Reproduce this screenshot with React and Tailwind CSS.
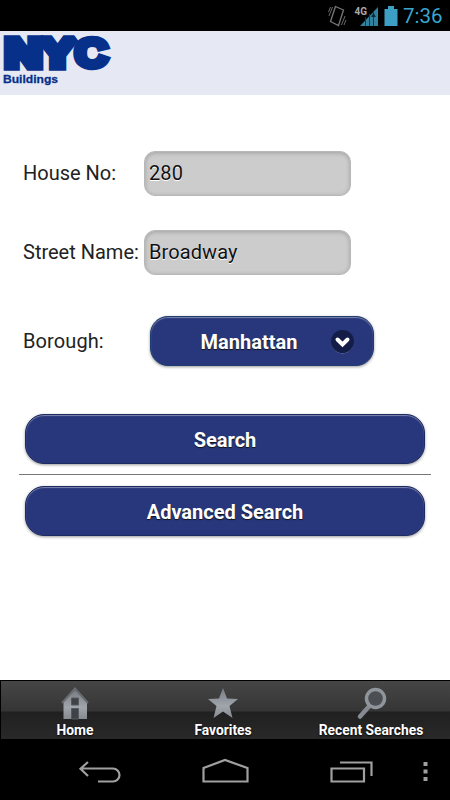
import React from "react";

const fields = [
  { id: "house", label: "House No:", value: "280" },
  { id: "street", label: "Street Name:", value: "Broadway" },
];

export default function App() {
  return (
    <div className="w-[450px] h-[800px] flex flex-col overflow-hidden bg-white font-['Roboto',sans-serif]">
      <StatusBar />
      <header className="h-[64px] shrink-0 bg-[#e6e9f4]">
        <Logo />
      </header>
      <SearchForm />
      <TabBar />
      <SystemNav />
    </div>
  );
}

function StatusBar() {
  return (
    <div className="h-[31px] shrink-0 bg-black flex items-center justify-end pr-[8px]">
      <svg width="72" height="31" viewBox="0 0 72 31">
        <g fill="none" stroke="#777" strokeWidth="1.3">
          <path d="M7.500 6.500 15.500 10 10.500 25.500 2.500 21.500Z" />
          <path d="M4.500 7 1 16M2.500 7 0.500 12M17 16l-3.500 9M18 20l-2 5" strokeWidth="0.9" />
        </g>
        <text x="26.500" y="15" fontSize="11" fontWeight="700" fill="#aaa" textLength="12.500" lengthAdjust="spacingAndGlyphs">4G</text>
        <path d="M32 26 50 7v19Z" fill="#31819f" />
        <path d="M37.500 17v9M41.500 14v12M45.500 11v15" stroke="#123a49" strokeWidth="1" />
        <path d="M43 17l2.500-4 2.500 4Z" fill="#0b2936" />
        <path d="M60 6h6v3h3.500v17h-13V9H60Z" fill="#3e9fc5" />
      </svg>
      <span className="ml-[3px] w-[39px] pt-[2px] text-[20.500px] leading-[29px] text-[#3aa6d0] whitespace-nowrap">7:36</span>
    </div>
  );
}

function Logo() {
  return (
    <svg width="120" height="64" viewBox="0 0 120 64" fontFamily="Liberation Sans, sans-serif" fontWeight="700" fill="#06308a">
      <g fontSize="40" stroke="#06308a" strokeWidth="7.500" strokeLinejoin="miter" strokeMiterlimit="2">
        <text x="5" y="36" textLength="37" lengthAdjust="spacingAndGlyphs">N</text>
        <text x="40" y="36" textLength="35" lengthAdjust="spacingAndGlyphs">Y</text>
        <text x="75" y="36" strokeWidth="6.500" textLength="32.500" lengthAdjust="spacingAndGlyphs">C</text>
      </g>
      <text x="3" y="52" fontSize="11.500" textLength="55" stroke="#06308a" strokeWidth="0.3" lengthAdjust="spacingAndGlyphs">Buildings</text>
    </svg>
  );
}

function SearchForm() {
  return (
    <main className="flex-1 pt-[56px]">
      {fields.map((f) => (
        <div key={f.id} className="h-[45px] mb-[34px] pl-[23px] flex items-center">
          <label htmlFor={f.id} className="w-[121px] pb-[2px] text-[20px] text-[#222] whitespace-nowrap">
            {f.label}
          </label>
          <input
            id={f.id}
            defaultValue={f.value}
            className="w-[207px] h-[45px] px-[4px] pb-[1px] rounded-[11px] border border-[#b8b8b8] bg-[#ccc] text-[20px] tracking-[0.1px] text-[#111] shadow-[inset_0_1px_4px_rgba(0,0,0,0.22)] [text-shadow:0_1px_0_#fff] outline-none"
          />
        </div>
      ))}
      <div className="h-[50px] mt-[41px] pl-[23px] flex items-center">
        <span className="w-[127px] text-[20px] tracking-[0.1px] text-[#222]">Borough:</span>
        <button className="relative w-[224px] h-[50px] pt-[1px] pr-[26px] rounded-[18px] border border-[#1e3d70] bg-[#28377b] text-[20px] font-bold text-white shadow-[inset_0_1px_1px_rgba(255,255,255,0.4),0_1px_3px_rgba(0,0,0,0.4)] [text-shadow:0_1px_1px_#111]">
          Manhattan
          <svg className="absolute right-[18px] top-[12px]" width="25" height="25" viewBox="0 0 25 25">
            <circle cx="12.500" cy="13.500" r="11" fill="#7580ad" />
            <circle cx="12.500" cy="12.500" r="11.500" fill="#141c48" />
            <path d="m7.500 10.500 5 5 5-5" fill="none" stroke="#fff" strokeWidth="4" strokeLinecap="round" />
          </svg>
        </button>
      </div>
      <div className="mt-[48px] px-[19px]">
        <ActionButton>Search</ActionButton>
        <hr className="mt-[10px] mb-[11px] border-t-[1.500px] border-[#777]" />
        <ActionButton>Advanced Search</ActionButton>
      </div>
    </main>
  );
}

function ActionButton({ children }) {
  return (
    <button className="block w-[400px] h-[50px] pt-[1px] mx-auto rounded-[19px] border border-[#1d2b63] bg-[#28377b] text-[20px] font-bold text-white shadow-[inset_0_1px_1px_rgba(255,255,255,0.4),0_1px_3px_rgba(0,0,0,0.4)] [text-shadow:0_1px_1px_#111]">
      {children}
    </button>
  );
}

const tabs = [
  { label: "Home", Icon: HomeIcon },
  { label: "Favorites", Icon: StarIcon },
  { label: "Recent Searches", Icon: SearchIcon },
];

function TabBar() {
  return (
    <nav className="h-[59px] shrink-0 grid grid-cols-3 pr-[5px] border-t border-l border-black bg-[linear-gradient(#464646_0px,#353535_30px,#202020_31px,#292929_58px)]">
      {tabs.map(({ label, Icon }) => (
        <div key={label} className="flex flex-col items-center pt-[5px]">
          <Icon />
          <span className="text-[13.800px] leading-[16px] font-bold text-white whitespace-nowrap [text-shadow:0_1px_2px_#000]">
            {label}
          </span>
        </div>
      ))}
    </nav>
  );
}

function Metal({ id }) {
  return (
    <defs>
      <linearGradient id={id} x1="0" y1="0" x2="0" y2="1">
        <stop offset="0" stopColor="#777c82" />
        <stop offset="0.600" stopColor="#a1a6ad" />
        <stop offset="1" stopColor="#858a91" />
      </linearGradient>
    </defs>
  );
}

function HomeIcon() {
  return (
    <svg width="36" height="36" viewBox="0 0 36 36">
      <Metal id="house-fill" />
      <path d="M6.500 15 18 4l12 11v18h-23.500Z" fill="url(#house-fill)" />
      <path d="M5 17 18 2.500 31 17" fill="none" stroke="#686c70" strokeWidth="2" />
      <path d="M14.500 12h7v7h-7ZM14.500 22.500h7V33h-7Z" fill="#3f4246" stroke="#555a60" />
    </svg>
  );
}

function StarIcon() {
  return (
    <svg width="36" height="36" viewBox="0 0 36 36">
      <Metal id="star-fill" />
      <path d="m18 2 4 10.500 11 .5-8.500 7L27.500 32 18 25.500 8.500 32l3-12L3 13l11-.5Z" fill="url(#star-fill)" />
    </svg>
  );
}

function SearchIcon() {
  return (
    <svg width="36" height="36" viewBox="0 0 36 36">
      <path d="m15.500 21-8.500 9.500" stroke="#858a90" strokeWidth="4.500" strokeLinecap="round" />
      <circle cx="22.500" cy="12.500" r="9" fill="#4b4e52" stroke="#90959b" strokeWidth="3.500" />
    </svg>
  );
}

function SystemNav() {
  return (
    <div className="h-[61px] shrink-0 bg-black">
      <svg width="450" height="61" viewBox="0 0 450 61" fill="none" stroke="#a0a0a0" strokeWidth="2.200">
        <path d="M98 42.500h15a6.500 6.500 0 0 0 0-13H81M88 23l-7.500 6.700L88 37" />
        <path d="M203.500 42.500V29L225 21l22.500 8v13.500Z" />
        <path d="M331.500 29.500h32.500v13h-32.500ZM340 23.500h31.500V37" />
        <path d="M423.500 23h4v4h-4ZM423.500 30.500h4v4h-4ZM423.500 38h4v4h-4Z" fill="#a0a0a0" stroke="none" />
      </svg>
    </div>
  );
}
